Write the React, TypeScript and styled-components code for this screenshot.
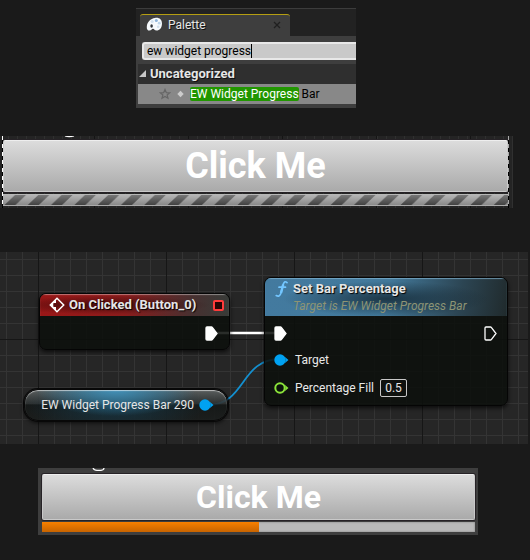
import React, { useState } from "react";
import styled, { createGlobalStyle } from "styled-components";

const GlobalStyle = createGlobalStyle`
  * { box-sizing: border-box; }
  body {
    margin: 0;
    background: #1a1a1a;
    font-family: Roboto, "Liberation Sans", sans-serif;
    font-size: 12px;
    line-height: 16px;
    color: #e6e6e6;
  }
  button, input { font: inherit; color: inherit; margin: 0; padding: 0; border: 0; background: none; }
`;

const Page = styled.main`
  display: flex;
  flex-direction: column;
  padding: 8px 0 24px;
`;

/* ---------- palette ---------- */

const PalettePanel = styled.section`
  align-self: flex-start;
  width: 220px;
  margin-left: 136px;
  padding: 5px 0 4px 2px;
  border-top: 1px solid #3c3c3c;
  background: linear-gradient(#222 27px, #3e3e3e 27px);
`;

const TabStrip = styled.div`
  display: flex;
  padding-left: 2px;
  background: #222;
`;

const TabBox = styled.div`
  display: flex;
  align-items: center;
  width: 150px;
  height: 22px;
  padding: 0 6px 2px;
  border-top: 1px solid #b59e12;
  border-radius: 3px 3px 0 0;
  background: #3e3e3e;
`;

const TabButton = styled.button`
  display: flex;
  flex: 1;
  align-items: center;
  gap: 5px;
  text-shadow: 1px 1px 0 #111;
`;

const IconButton = styled.button`
  display: flex;
  svg { display: block; }
`;

const SearchArea = styled.div`
  position: relative;
  padding: 6px 0 4px 4px;
  background: #3e3e3e;
`;

const SearchInput = styled.input`
  display: block;
  width: 100%;
  height: 18px;
  padding: 0 3px;
  border: 2px solid #e8e8e8;
  border-right: 0;
  border-radius: 3px 0 0 3px;
  background: #c9c9c9;
  color: #000;
  font-size: 12px;
  line-height: 14px;
  outline: none;
`;

const Caret = styled.span`
  position: absolute;
  top: 8px;
  left: 113px;
  width: 1px;
  height: 14px;
  background: #000;
`;

const Category = styled.button`
  display: flex;
  align-items: center;
  gap: 3px;
  width: 100%;
  height: 20px;
  padding-left: 1px;
  background: #2f2f2f;
  font-size: 13px;
  font-weight: 700;
  text-shadow: 1px 1px 0 #111;
`;

const ResultRow = styled.div`
  display: flex;
  align-items: center;
  height: 20px;
  padding-left: 21px;
  background: #888;
`;

const ResultButton = styled.button`
  display: flex;
  align-items: center;
  gap: 6px;
  margin-left: 6px;
  color: #000;
  white-space: pre;
`;

const Match = styled.mark`
  background: #219600;
  border-radius: 2px;
  color: #fff;
`;

/* ---------- button with progress bar ---------- */

const Designer = styled.section`
  position: relative;
  margin: 28px 17px 0 0;
  padding: 4px 5px 2px 3px;
  overflow: hidden;
  background:
    repeating-linear-gradient(90deg, transparent 0 93px, #151515 93px 94px) 1px 0,
    repeating-linear-gradient(90deg, #242424 0 8px, #303030 8px 9px);
`;

const SelectionEdge = styled.span<{ $side: "left" | "right" }>`
  position: absolute;
  top: 0;
  bottom: 0;
  ${(p) => (p.$side === "left" ? "left: 2px;" : "right: 4px;")}
  width: 1px;
  background: repeating-linear-gradient(${(p) => (p.$side === "left" ? "#fff" : "#aaa")} 0 4px, #000 4px 8px);
`;

const Game = styled.section`
  position: relative;
  margin: 24px 52px 0 38px;
  padding: 6px 3px 3px 4px;
  overflow: hidden;
  background: #3e3e3e;
`;

const Fragment = styled.svg<{ $left: number }>`
  position: absolute;
  top: 0;
  left: ${(p) => p.$left}px;
`;

const ClickButton = styled.button<{ $size: "large" | "medium" }>`
  display: block;
  width: 100%;
  height: ${(p) => (p.$size === "large" ? 52 : 46)}px;
  border: 1px solid #c9c9c9;
  border-top-color: #eee;
  border-radius: 2px;
  background: linear-gradient(#dcdcdc, #aaa);
  box-shadow: 0 0 0 1px #262226;
  color: #fff;
  font-size: ${(p) => (p.$size === "large" ? 36 : 32)}px;
  line-height: 40px;
  font-weight: 700;
`;

const Stripes = styled.svg`
  display: block;
  width: 100%;
  height: 12px;
  margin-top: 2px;
`;

const Track = styled.div`
  height: 10px;
  margin-top: 2px;
  background: #b9b9b9;
  box-shadow: inset 0 0 2px #777;
`;

const Fill = styled.div`
  height: 100%;
  background: linear-gradient(#f88000, #c86400);
`;

/* ---------- graph ---------- */

const Graph = styled.section`
  position: relative;
  height: 192px;
  margin: 44px 2px 0 0;
  overflow: hidden;
  background-color: #262626;
  background-image:
    linear-gradient(90deg, #161616 1px, transparent 1px),
    linear-gradient(#161616 1px, transparent 1px),
    linear-gradient(90deg, #343434 1px, transparent 1px),
    linear-gradient(#343434 1px, transparent 1px);
  background-size: 128px 100%, 100% 128px, 16px 100%, 100% 16px;
  background-position: 38px 0, 0 87px, 6px 0, 0 7px;
`;

const Wires = styled.svg`
  position: absolute;
  top: 0;
  left: 0;
`;

const Node = styled.article<{ $x: number; $y: number; $w: number }>`
  position: absolute;
  left: ${(p) => p.$x}px;
  top: ${(p) => p.$y}px;
  width: ${(p) => p.$w}px;
  border: 1px solid #050505;
  border-radius: 7px;
  overflow: hidden;
  background: rgba(13, 16, 13, 0.88);
  box-shadow: 0 2px 4px rgba(0, 0, 0, 0.7);
`;

const EventHeader = styled.header`
  display: flex;
  align-items: center;
  gap: 4px;
  height: 22px;
  padding: 0 5px 0 9px;
  background:
    radial-gradient(ellipse at 35% 50%, rgba(40, 5, 5, 0.7), transparent 60%),
    linear-gradient(90deg, #991717, #8a1c1c 45%, #483030 80%, #383b38);
  box-shadow: inset 0 1px 1px #ffffff66;
`;

const FunctionHeader = styled.header`
  display: flex;
  gap: 5px;
  height: 38px;
  padding: 2px 10px 0 10px;
  background:
    radial-gradient(ellipse at 50% 55%, rgba(15, 32, 42, 0.75), transparent 60%),
    linear-gradient(100deg, #437a9f, #42799b 50%, #2c4553 80%, #202a2c);
  box-shadow: inset 0 1px 1px #8cbcd8aa;
`;

const NodeTitle = styled.h2`
  flex: 1;
  margin: 0;
  font-size: 13px;
  line-height: 18px;
  font-weight: 700;
  text-shadow: 1px 1px 1px #000;
  white-space: nowrap;
`;

const NodeNote = styled.p`
  margin: 0;
  font-size: 12px;
  line-height: 16px;
  font-style: italic;
  color: #8d9474;
  white-space: nowrap;
`;

const NodeBody = styled.div<{ $pad: string }>`
  padding: ${(p) => p.$pad};
`;

const PinRow = styled.div<{ $h: number; $justify?: string }>`
  display: flex;
  align-items: center;
  justify-content: ${(p) => p.$justify ?? "flex-start"};
  gap: 6px;
  height: ${(p) => p.$h}px;
  color: #e8e8e8;
  white-space: nowrap;
`;

const FillLabel = styled.label`
  display: flex;
  align-items: center;
  gap: 6px;
`;

const NumberInput = styled.input`
  width: 27px;
  height: 18px;
  border: 1px solid #c8c8c8;
  border-radius: 2px;
  text-align: center;
`;

const VariableNode = styled.article`
  position: absolute;
  left: 24px;
  top: 137px;
  display: flex;
  align-items: center;
  justify-content: flex-end;
  gap: 5px;
  width: 204px;
  height: 32px;
  padding-right: 13px;
  border: 1px solid #080808;
  border-radius: 14px;
  background:
    radial-gradient(ellipse 80px 26px at 45% 0, rgba(65, 155, 200, 0.85), transparent),
    radial-gradient(ellipse 90px 30px at 45% 50%, rgba(20, 70, 95, 0.6), transparent),
    linear-gradient(rgba(95, 100, 100, 0.9), rgba(45, 49, 49, 0.9) 45%, rgba(20, 23, 22, 0.9) 50%, rgba(26, 29, 28, 0.9));
  box-shadow: inset 0 1px 1px #ffffff99, 0 0 0 1px #080808, 0 2px 4px rgba(0, 0, 0, 0.7);
  white-space: nowrap;
`;

function ExecPin({ filled }: { filled?: boolean }) {
  return (
    <svg width="13" height="15" viewBox="0 0 13 15" aria-hidden="true">
      <path
        d="M2 1H6.5Q7 1 7.5 1.6L12 7.5L7.5 13.4Q7 14 6.5 14H2Q1 14 1 13V2Q1 1 2 1Z"
        fill={filled ? "#fff" : "none"}
        stroke="#fff"
        strokeWidth="1.3"
      />
    </svg>
  );
}

function DataPin({ color, filled }: { color: string; filled?: boolean }) {
  return (
    <svg width="15" height="12" viewBox="0 0 15 12" aria-hidden="true">
      <circle cx="6" cy="6" r="4.7" fill={filled ? color : "#0b120b"} stroke={color} strokeWidth="2" />
      <path d="M11 3L14.5 6L11 9Q12 6 11 3Z" fill={color} />
    </svg>
  );
}

function PaletteIcon() {
  return (
    <svg width="17" height="15" viewBox="0 0 17 15" aria-hidden="true">
      <path
        d="M9 1C13 .3 16 2.5 16 6.5C16 11 13.5 13.5 10.5 13.5C8.4 13.5 8.4 11.8 7 11.7C5.5 11.7 5.5 13.6 3.5 13.6C1.5 13.6.5 12 .8 9.4C1.3 5 4.5 1.6 9 1Z"
        fill="#f6fafd"
      />
      <circle cx="6.2" cy="4.6" r="1.5" fill="#d3e2f0" />
      <circle cx="10.3" cy="3.6" r="1.5" fill="#8db4da" />
      <circle cx="13.2" cy="6.2" r="1.4" fill="#bcd5ea" />
      <circle cx="12.2" cy="9.8" r="1.3" fill="#cfdfed" />
      <ellipse cx="5.6" cy="9" rx="1.3" ry="1.8" fill="#33383d" />
    </svg>
  );
}

export default function App() {
  const [query, setQuery] = useState("ew widget progress");
  const [amount, setAmount] = useState("0.5");

  return (
    <>
      <GlobalStyle />
      <Page>
        <PalettePanel>
          <TabStrip role="tablist">
            <TabBox>
              <TabButton role="tab" aria-selected="true">
                <PaletteIcon />
                Palette
              </TabButton>
              <IconButton aria-label="Close Palette">
                <svg width="14" height="8" viewBox="0 0 14 8">
                  <path d="M4 1L10 7M10 1L4 7" stroke="#202020" strokeWidth="1.3" />
                </svg>
              </IconButton>
            </TabBox>
          </TabStrip>
          <SearchArea>
            <SearchInput aria-label="Search palette" value={query} onChange={(e) => setQuery(e.target.value)} />
            <Caret />
          </SearchArea>
          <Category aria-expanded="true">
            <svg width="8" height="8" viewBox="0 0 8 8" aria-hidden="true">
              <path d="M7 0V7H0Z" fill="#c8c8c8" />
            </svg>
            Uncategorized
          </Category>
          <ResultRow>
            <IconButton aria-label="Add to favorites">
              <svg width="12" height="12" viewBox="0 0 12 12">
                <path
                  d="M6 1.5L7.3 4.6L10.7 4.8L8.1 7L9 10.3L6 8.5L3 10.3L3.9 7L1.3 4.8L4.7 4.6Z"
                  fill="none"
                  stroke="#666"
                  strokeWidth="1.2"
                />
              </svg>
            </IconButton>
            <ResultButton>
              <svg width="7" height="8" viewBox="0 0 7 8" aria-hidden="true">
                <path d="M3.5 .8L6.7 4L3.5 7.2L.3 4Z" fill="#ccc" />
              </svg>
              <span>
                <Match>EW Widget Progress</Match> Bar
              </span>
            </ResultButton>
          </ResultRow>
        </PalettePanel>

        <Designer>
          <Fragment $left={64} width="12" height="2" viewBox="0 0 12 2" aria-hidden="true">
            <path d="M1 0Q5 1.2 10 0" fill="none" stroke="#fff" strokeWidth="1.2" />
          </Fragment>
          <ClickButton $size="large">Click Me</ClickButton>
          <Stripes role="progressbar" aria-label="Progress">
            <defs>
              <linearGradient id="barShade" x2="0" y2="1">
                <stop offset="0" stopColor="#bababa" />
                <stop offset="1" stopColor="#858585" />
              </linearGradient>
              <linearGradient id="stripeShade" x2="0" y2="1">
                <stop offset="0" stopColor="#777" />
                <stop offset="1" stopColor="#424242" />
              </linearGradient>
              <pattern id="stripes" width="23.3" height="12" patternUnits="userSpaceOnUse">
                <path d="M1.5 11L12 1H23L12.5 11Z" fill="url(#stripeShade)" />
              </pattern>
            </defs>
            <rect width="100%" height="12" fill="url(#barShade)" />
            <rect width="100%" height="12" fill="url(#stripes)" />
            <rect y="11" width="100%" height="1" fill="#aaa" />
          </Stripes>
          <SelectionEdge $side="left" />
          <SelectionEdge $side="right" />
        </Designer>

        <Graph>
          <Wires width="528" height="192" viewBox="0 0 528 192" aria-hidden="true">
            <path d="M214 81H276" stroke="#fff" strokeWidth="2.6" />
            <path d="M208 153C246 153 240 107 280 107" fill="none" stroke="#1490d0" strokeWidth="1.8" />
          </Wires>

          <Node $x={39} $y={41} $w={191}>
            <EventHeader>
              <svg width="16" height="16" viewBox="0 0 16 16" aria-hidden="true">
                <path d="M8 1.3L14.7 8L8 14.7L1.3 8Z" fill="none" stroke="#fff" strokeWidth="1.5" />
                <path d="M1 8L7 2V6H4.5V10H7V14Z" fill="#fff" />
                <path d="M4.5 6.5H7.5V4.5L11 8L7.5 11.5V9.5H4.5Z" fill="#5b1111" />
              </svg>
              <NodeTitle>On Clicked (Button_0)</NodeTitle>
              <svg width="11" height="11" viewBox="0 0 11 11" aria-hidden="true">
                <rect x="1" y="1" width="9" height="9" rx="1" fill="#260606" stroke="#ff3b3b" strokeWidth="2" />
              </svg>
            </EventHeader>
            <NodeBody $pad="6px 11px 5px">
              <PinRow $h={22} $justify="flex-end">
                <ExecPin filled />
              </PinRow>
            </NodeBody>
          </Node>

          <Node $x={264} $y={25} $w={244}>
            <FunctionHeader>
              <svg width="13" height="18" viewBox="0 0 13 18" aria-hidden="true">
                <path
                  d="M12 2.6Q9.7 .4 8.3 4L5.8 13.5Q4.4 17.3 1.2 15.6M4 7.2H10.5"
                  fill="none"
                  stroke="#73c6ff"
                  strokeWidth="1.7"
                  strokeLinecap="round"
                />
                <path d="M8.2 4.5L6 13" stroke="#73c6ff" strokeWidth="2.4" />
              </svg>
              <div>
                <NodeTitle>Set Bar Percentage</NodeTitle>
                <NodeNote>Target is EW Widget Progress Bar</NodeNote>
              </div>
            </FunctionHeader>
            <NodeBody $pad="4px 10px 3px 9px">
              <PinRow $h={26} $justify="space-between">
                <ExecPin filled />
                <ExecPin />
              </PinRow>
              <PinRow $h={28}>
                <DataPin color="#00a2f2" filled />
                Target
              </PinRow>
              <PinRow $h={28}>
                <DataPin color="#8be33a" />
                <FillLabel>
                  Percentage Fill
                  <NumberInput value={amount} onChange={(e) => setAmount(e.target.value)} />
                </FillLabel>
              </PinRow>
            </NodeBody>
          </Node>

          <VariableNode>
            EW Widget Progress Bar 290
            <DataPin color="#00a2f2" filled />
          </VariableNode>
        </Graph>

        <Game>
          <Fragment $left={54} width="14" height="3" viewBox="0 0 14 3" aria-hidden="true">
            <path d="M1 0Q2 2.3 5 2.3H9Q12 2 12 0" fill="none" stroke="#fff" strokeWidth="1.2" />
          </Fragment>
          <ClickButton $size="medium">Click Me</ClickButton>
          <Track role="progressbar" aria-label="Progress" aria-valuenow={50} aria-valuemin={0} aria-valuemax={100}>
            <Fill style={{ width: `${Number(amount) * 100 || 0}%` }} />
          </Track>
        </Game>
      </Page>
    </>
  );
}
